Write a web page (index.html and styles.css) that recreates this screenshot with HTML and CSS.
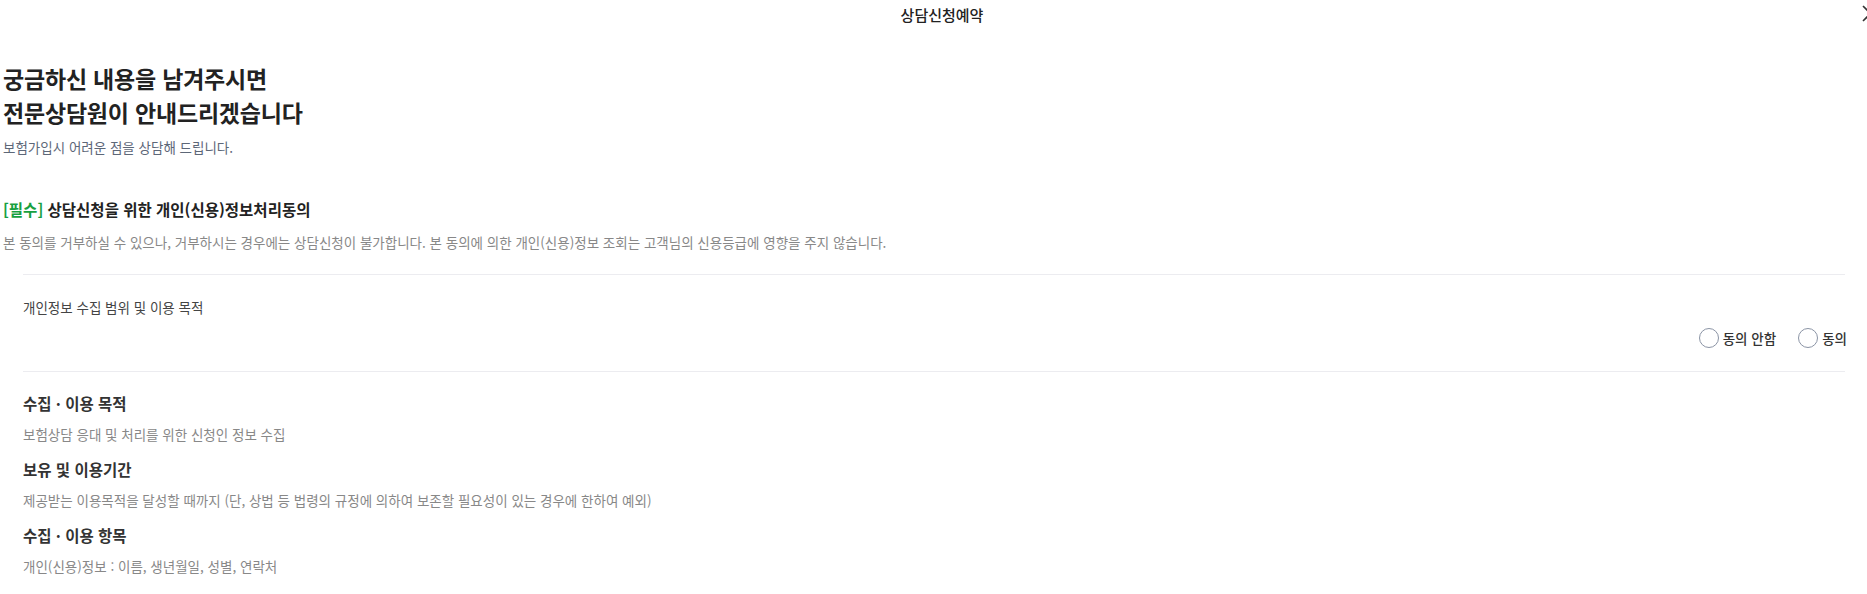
FILE: index.html
```html
<!DOCTYPE html>
<html lang="ko">

<head>
    <meta charset="UTF-8">
    <meta name="viewport" content="width=device-width, initial-scale=1.0">
    <title>상담신청예약</title>
    <link rel="stylesheet" href="styles.css">
</head>

<body>
    <div class="modal">
        <header class="modal-head">
            <h1 class="modal-title">상담신청예약</h1>
            <button class="close-btn" aria-label="닫기">
                <svg width="17" height="17" viewBox="0 0 17 17">
                    <path d="M1 1 L16 16 M16 1 L1 16" stroke="#333" stroke-width="1.6" fill="none"/>
                </svg>
            </button>
        </header>

        <div class="content">
            <h2 class="intro-title">궁금하신 내용을 남겨주시면<br>전문상담원이 안내드리겠습니다</h2>
            <p class="intro-sub">보험가입시 어려운 점을 상담해 드립니다.</p>

            <h3 class="agree-title"><span class="required">[필수]</span> 상담신청을 위한 개인(신용)정보처리동의</h3>
            <p class="agree-desc">본 동의를 거부하실 수 있으나, 거부하시는 경우에는 상담신청이 불가합니다. 본 동의에 의한 개인(신용)정보 조회는 고객님의 신용등급에 영향을 주지 않습니다.</p>

            <div class="agree-box">
                <div class="agree-row">
                    <p class="agree-label">개인정보 수집 범위 및 이용 목적</p>
                    <div class="radio-group">
                        <label class="radio"><input type="radio" name="agree1"><span class="dot"></span>동의 안함</label>
                        <label class="radio"><input type="radio" name="agree1"><span class="dot"></span>동의</label>
                    </div>
                </div>

                <dl class="terms">
                    <dt>수집 · 이용 목적</dt>
                    <dd>보험상담 응대 및 처리를 위한 신청인 정보 수집</dd>
                    <dt>보유 및 이용기간</dt>
                    <dd>제공받는 이용목적을 달성할 때까지 (단, 상법 등 법령의 규정에 의하여 보존할 필요성이 있는 경우에 한하여 예외)</dd>
                    <dt>수집 · 이용 항목</dt>
                    <dd>개인(신용)정보 : 이름, 생년월일, 성별, 연락처</dd>
                </dl>
            </div>
        </div>
    </div>
</body>

</html>
```

FILE: styles.css
```css
html, body {
    margin: 0;
    padding: 0;
    overflow: hidden;
    background: #fff;
}

body {
    font-family: "Noto Sans CJK KR", "Noto Sans", sans-serif;
    color: #222;
}

.modal {
    width: 1884px;
    position: relative;
}

.modal-head {
    height: 30px;
    display: flex;
    align-items: center;
    justify-content: center;
}

.modal-title {
    margin: 0;
    font-size: 15px;
    font-weight: 500;
    line-height: 30px;
    color: #222;
}

.close-btn {
    position: absolute;
    top: 5px;
    right: 5px;
    width: 17px;
    height: 17px;
    padding: 0;
    border: none;
    background: none;
    cursor: pointer;
}

.close-btn svg {
    display: block;
}

.content {
    width: 1842px;
    margin-left: 3px;
}

.intro-title {
    margin: 31px 0 0;
    font-size: 23px;
    line-height: 34px;
    font-weight: 700;
    color: #222;
    letter-spacing: -0.2px;
}

.intro-sub {
    margin: 8px 0 0;
    font-size: 13.5px;
    line-height: 20px;
    color: #5d6778;
}

.agree-title {
    margin: 41px 0 0;
    font-size: 15.5px;
    line-height: 22px;
    font-weight: 700;
    color: #222;
}

.required {
    color: #17a03f;
}

.agree-desc {
    margin: 12px 0 0;
    font-size: 13.5px;
    line-height: 20px;
    color: #888;
}

.agree-box {
    margin-top: 22px;
    padding-left: 20px;
}

.agree-row {
    border-top: 1px solid #ececf0;
    border-bottom: 1px solid #ececf0;
    padding: 22px 0 23px;
}

.agree-label {
    margin: 0;
    font-size: 13.5px;
    line-height: 20px;
    color: #444;
}

.radio-group {
    margin: 11px -2px 0 0;
    display: flex;
    justify-content: flex-end;
    gap: 22px;
}

.radio {
    display: flex;
    align-items: center;
    gap: 4px;
    height: 20px;
    font-size: 13.5px;
    font-weight: 500;
    color: #333;
    cursor: pointer;
}

.radio input {
    display: none;
}

.dot {
    width: 20px;
    height: 20px;
    box-sizing: border-box;
    border: 1px solid #8b94a5;
    border-radius: 50%;
}

.terms {
    margin: 0;
    padding-top: 20px;
}

.terms dt {
    font-size: 15.5px;
    line-height: 22px;
    font-weight: 700;
    color: #333;
}

.terms dd {
    margin: 10px 0 14px;
    font-size: 13.5px;
    line-height: 20px;
    color: #888;
}
```
